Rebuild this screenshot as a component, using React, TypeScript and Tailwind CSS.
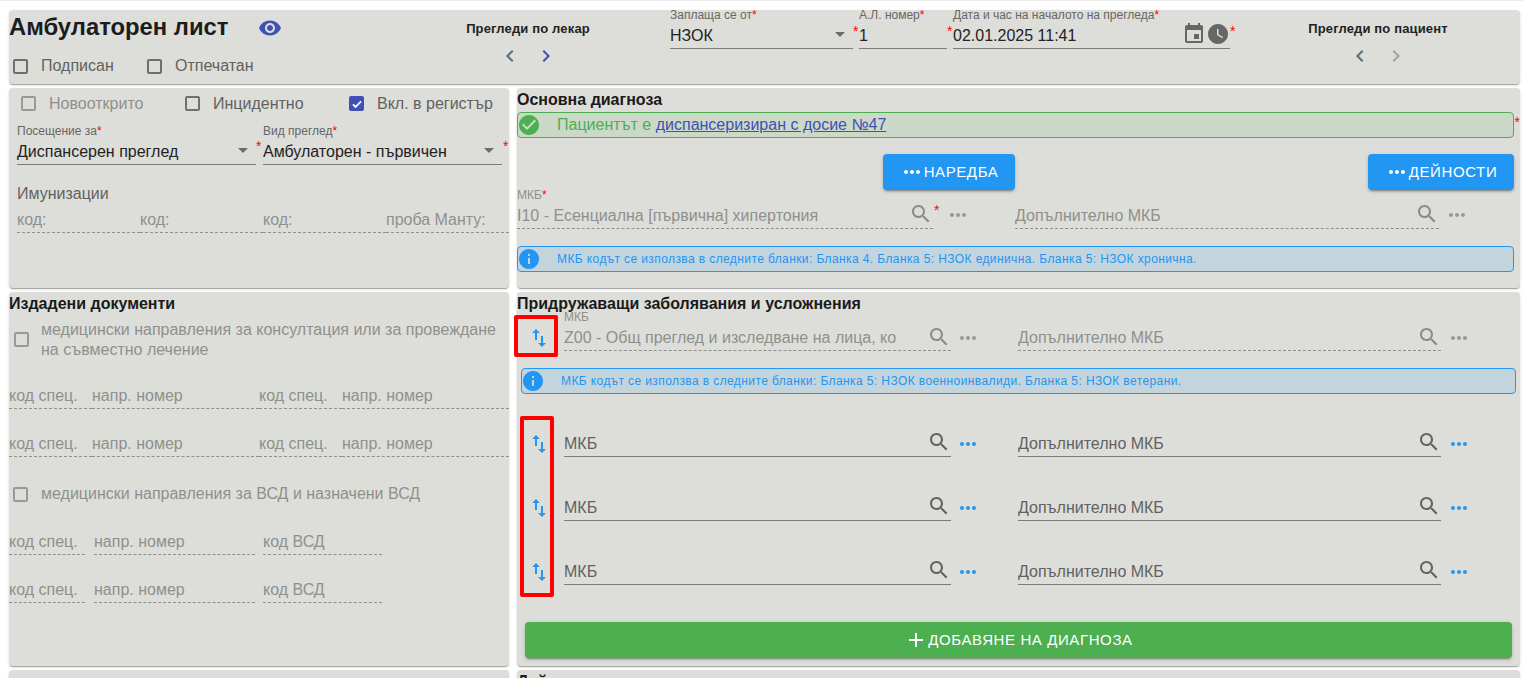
import React from "react";

const P = {
  eye: "M12 4.5C7 4.5 2.73 7.61 1 12c1.73 4.39 6 7.5 11 7.5s9.27-3.11 11-7.5c-1.73-4.39-6-7.5-11-7.5zM12 17c-2.76 0-5-2.24-5-5s2.24-5 5-5 5 2.24 5 5-2.24 5-5 5zm0-8c-1.66 0-3 1.34-3 3s1.34 3 3 3 3-1.34 3-3-1.34-3-3-3z",
  search: "M15.5 14h-.79l-.28-.27C15.41 12.59 16 11.11 16 9.5 16 5.91 13.09 3 9.5 3S3 5.91 3 9.5 5.91 16 9.5 16c1.61 0 3.09-.59 4.23-1.57l.27.28v.79l5 4.99L20.49 19l-4.99-5zm-6 0C7.01 14 5 11.99 5 9.5S7.01 5 9.5 5 14 7.01 14 9.5 11.99 14 9.5 14z",
  event: "M17 12h-5v5h5v-5zM16 1v2H8V1H6v2H5c-1.11 0-1.99.9-1.99 2L3 19c0 1.1.89 2 2 2h14c1.1 0 2-.9 2-2V5c0-1.1-.9-2-2-2h-1V1h-2zm3 18H5V8h14v11z",
  clock: "M12 2C6.5 2 2 6.5 2 12s4.5 10 10 10 10-4.5 10-10S17.5 2 12 2zm4.2 14.2L11 13V7h1.5v5.2l4.5 2.7-.8 1.3z",
  dots: "M6 10c-1.1 0-2 .9-2 2s.9 2 2 2 2-.9 2-2-.9-2-2-2zm12 0c-1.1 0-2 .9-2 2s.9 2 2 2 2-.9 2-2-.9-2-2-2zm-6 0c-1.1 0-2 .9-2 2s.9 2 2 2 2-.9 2-2-.9-2-2-2z",
  ok: "M12 2C6.48 2 2 6.48 2 12s4.48 10 10 10 10-4.48 10-10S17.52 2 12 2zm-2 15l-5-5 1.41-1.41L10 14.17l7.59-7.59L19 8l-9 9z",
  info: "M12 2C6.48 2 2 6.48 2 12s4.48 10 10 10 10-4.48 10-10S17.52 2 12 2zm1 15h-2v-6h2v6zm0-8h-2V7h2v2z",
  left: "M15.41 7.41L14 6l-6 6 6 6 1.41-1.41L10.83 12z",
  right: "M10 6L8.59 7.41 13.17 12l-4.58 4.59L10 18l6-6z",
  swap: "M16 17.01V10h-2v7.01h-3L15 21l4-3.99h-3zM9 3L5 6.99h3V14h2V6.99h3L9 3z",
  drop: "M7 10l5 5 5-5z",
  add: "M19 13h-6v6h-2v-6H5v-2h6V5h2v6h6v2z",
};

function Icon({ d, className = "" }: { d: string; className?: string }) {
  return (
    <svg viewBox="0 0 24 24" className={`w-6 h-6 shrink-0 fill-current ${className}`}>
      <path d={d} />
    </svg>
  );
}

const Star = ({ className = "" }: { className?: string }) => (
  <span className={`text-[#f00] text-[14px] leading-none ${className}`}>*</span>
);

function Check({ label, checked, disabled, className = "" }: { label: string; checked?: boolean; disabled?: boolean; className?: string }) {
  return (
    <div className={`flex items-center gap-[13px] text-[16px] ${disabled ? "text-[#8f908d]" : "text-[#62625f]"} ${className}`}>
      {checked ? (
        <span className="w-[15px] h-[15px] rounded-[2px] bg-[#3f51b5] flex items-center justify-center shrink-0">
          <svg viewBox="0 0 24 24" className="w-[14px] h-[14px] fill-none stroke-white stroke-[3]">
            <path d="M5 12.5l4.5 4.5L19 7.5" />
          </svg>
        </span>
      ) : (
        <span className={`w-[15px] h-[15px] rounded-[2px] border-2 shrink-0 ${disabled ? "border-[#999a97]" : "border-[#6f706d]"}`} />
      )}
      <span className="whitespace-nowrap">{label}</span>
    </div>
  );
}

function SelectField({ label, value, className = "" }: { label: string; value: string; className?: string }) {
  return (
    <div className={className}>
      <div className="h-[12px] text-[12px] leading-[12px] text-[#666] whitespace-nowrap">
        {label}
        <span className="text-[#f00]">*</span>
      </div>
      <div className="h-[28px] flex justify-between border-b border-[#7c7d7a] text-[16px] text-[#222]">
        <span className="self-center whitespace-nowrap pt-[3px]">{value}</span>
        <Icon d={P.drop} className="text-[#6b6b6b] mr-px mt-px" />
      </div>
    </div>
  );
}

function Cell({ text, className = "" }: { text: string; className?: string }) {
  return (
    <div className={`h-[26px] flex items-center border-b border-dashed border-[#8f908d] text-[16px] text-[#8f908d] whitespace-nowrap ${className}`}>
      {text}
    </div>
  );
}

function McbField({ value, disabled, small, className = "", star, searchTop = "mt-px" }: { value: string; disabled?: boolean; small?: string; className?: string; star?: boolean; searchTop?: string }) {
  return (
    <div className={`relative ${className}`}>
      {small && (
        <div className="absolute -top-[12px] left-0 text-[12px] leading-[12px] text-[#8f908d]">
          {small}
          {star && <span className="text-[#f00]">*</span>}
        </div>
      )}
      <div className={`h-[28px] flex justify-between border-b ${disabled ? "border-dashed border-[#8f908d] text-[#8f908d]" : "border-[#7c7d7a] text-[#62625f]"} text-[16px]`}>
        <span className={`self-center whitespace-nowrap overflow-hidden ${disabled ? "pt-[3px]" : "pt-[2px]"}`}>{value}</span>
        <Icon d={P.search} className={`${searchTop} ${disabled ? "text-[#8a8b88]" : "text-[#62625f]"}`} />
      </div>
    </div>
  );
}

function Alert({ kind, className = "", children }: { kind: "ok" | "info"; className?: string; children: React.ReactNode }) {
  return (
    <div className={`h-[26px] flex items-center rounded border ${kind === "ok" ? "border-[#4caf50] bg-[#ccd8c8]" : "border-[#2196f3] bg-[#c4d4dd]"} ${className}`}>
      <Icon d={kind === "ok" ? P.ok : P.info} className={`ml-[-1px] ${kind === "ok" ? "text-[#4caf50]" : "text-[#2196f3]"}`} />
      {children}
    </div>
  );
}

function Row({ first }: { first?: boolean }) {
  const top = first ? "mt-[2px]" : "mt-px";
  return (
    <div className={`flex items-start pl-[10px] ${first ? "mt-[9px] h-[30px]" : "mt-[36px] h-[28px]"}`}>
      <Icon d={P.swap} className="text-[#2196f3] mt-[3px]" />
      <McbField
        value={first ? "Z00 - Общ преглед и изследване на лица, ко" : "МКБ"}
        disabled={first}
        small={first ? "МКБ" : undefined}
        searchTop={top}
        className="w-[387px] ml-[13px]"
      />
      <Icon d={P.dots} className={`ml-[5px] mt-[3px] ${first ? "text-[#989996]" : "text-[#2196f3]"}`} />
      <McbField value="Допълнително МКБ" disabled={first} searchTop={top} className="w-[423px] ml-[38px]" />
      <Icon d={P.dots} className={`ml-[6px] mt-[3px] ${first ? "text-[#989996]" : "text-[#2196f3]"}`} />
    </div>
  );
}

const panel = "rounded bg-[#dddeD9] shadow-[0_2px_1px_-1px_rgba(0,0,0,0.2),0_1px_1px_0_rgba(0,0,0,0.14),0_1px_3px_0_rgba(0,0,0,0.12)]";
const heading = "h-[20px] mt-[2px] flex items-center text-[16px] font-bold text-[#1a1a1a] whitespace-nowrap";
const btn = "h-[36px] flex items-center justify-center rounded text-white text-[15px] tracking-[0.6px] shadow-[0_3px_1px_-2px_rgba(0,0,0,0.2),0_2px_2px_0_rgba(0,0,0,0.14),0_1px_5px_0_rgba(0,0,0,0.12)]";

function Nav({ title, leftC, rightC, className = "" }: { title: string; leftC: string; rightC: string; className?: string }) {
  return (
    <div className={`flex flex-col items-center pt-[10px] ${className}`}>
      <div className="h-[18px] flex items-center text-[13px] font-bold tracking-[0.15px] text-[#222] whitespace-nowrap">{title}</div>
      <div className="flex gap-3 mt-[6px]">
        <Icon d={P.left} className={leftC} />
        <Icon d={P.right} className={rightC} />
      </div>
    </div>
  );
}

export default function App() {
  return (
    <div className="h-[678px] overflow-hidden bg-white font-['Liberation_Sans',Arial,sans-serif]">
      <div className="h-px bg-[#eeeeee]" />
      <div className="pt-[9px] pl-[9px] pr-[3px]">
        {/* header */}
        <div className={`${panel} h-[74px] flex`}>
          <div className="w-[430px]">
            <div className="h-[33px] flex items-center">
              <span className="w-[219px] text-[23.8px] font-bold text-[#1c1c1c] whitespace-nowrap leading-none">Амбулаторен лист</span>
              <Icon d={P.eye} className="text-[#3f51b5] ml-[30px] mt-[3px]" />
            </div>
            <div className="flex mt-[11px] pl-[4px] h-[24px]">
              <Check label="Подписан" className="w-[134px]" />
              <Check label="Отпечатан" />
            </div>
          </div>
          <Nav title="Прегледи по лекар" leftC="text-[#546e7a]" rightC="text-[#3f51b5]" className="w-[178px]" />
          <div className="w-[53px]" />
          <SelectField label="Заплаща се от" value="НЗОК" className="w-[183px] -mt-px" />
          <Star className="w-[6px] mt-[14px]" />
          <div className="w-[88px] -mt-px">
            <div className="h-[12px] text-[12px] leading-[12px] text-[#666] whitespace-nowrap">А.Л. номер<span className="text-[#f00]">*</span></div>
            <div className="h-[28px] flex items-center border-b border-[#7c7d7a] text-[16px] text-[#222] pt-[3px]">1</div>
          </div>
          <Star className="w-[6px] mt-[14px]" />
          <div className="w-[277px] -mt-px">
            <div className="h-[12px] text-[12px] leading-[12px] text-[#666] whitespace-nowrap">Дата и час на началото на прегледа<span className="text-[#f00]">*</span></div>
            <div className="h-[28px] flex justify-between border-b border-[#7c7d7a] text-[16px] text-[#222]">
              <span className="self-center pt-[3px]">02.01.2025 11:41</span>
              <span className="flex text-[#666] mt-px h-6">
                <Icon d={P.event} />
                <Icon d={P.clock} />
              </span>
            </div>
          </div>
          <Star className="w-[6px] mt-[14px]" />
          <Nav title="Прегледи по пациент" leftC="text-[#546e7a]" rightC="text-[#a3a4a1]" className="flex-1" />
        </div>

        {/* row 2 */}
        <div className="flex gap-2 mt-1">
          <div className={`${panel} w-[500px] h-[200px]`}>
            <div className="h-[30px] flex pl-[12px] pt-px">
              <Check label="Новооткрито" disabled className="w-[164px]" />
              <Check label="Инцидентно" className="w-[164px]" />
              <Check label="Вкл. в регистър" checked />
            </div>
            <div className="flex pl-2 mt-[7px]">
              <SelectField label="Посещение за" value="Диспансерен преглед" className="w-[239px]" />
              <Star className="w-[7px] mt-[14px]" />
              <SelectField label="Вид преглед" value="Амбулаторен - първичен" className="w-[239px]" />
              <Star className="ml-[1px] mt-[14px]" />
            </div>
            <div className="pl-2 mt-[19px] h-[20px] flex items-center text-[16px] text-[#62625f]">Имунизации</div>
            <div className="grid grid-cols-[123px_123px_123px_123px] pl-2 mt-[3px]">
              <Cell text="код:" />
              <Cell text="код:" />
              <Cell text="код:" />
              <Cell text="проба Манту:" />
            </div>
          </div>

          <div className={`${panel} w-[1003px] h-[200px]`}>
            <div className={heading}>Основна диагноза</div>
            <div className="flex items-start mt-[2px]">
              <Alert kind="ok" className="w-[997px]">
                <span className="ml-[16px] text-[16px] text-[#4caf50] whitespace-nowrap">
                  Пациентът е <span className="text-[#3f51b5] underline">диспансеризиран с досие №47</span>
                </span>
              </Alert>
              <Star className="ml-px mt-[3px]" />
            </div>
            <div className="flex mt-[16px]">
              <div className={`${btn} bg-[#2196f3] w-[132px] ml-[366px]`}>
                <Icon d={P.dots} /> НАРЕДБА
              </div>
              <div className={`${btn} bg-[#2196f3] w-[146px] ml-[353px]`}>
                <Icon d={P.dots} /> ДЕЙНОСТИ
              </div>
            </div>
            <div className="flex items-start mt-[11px]">
              <div className="flex w-[416px]">
                <McbField value="I10 - Есенциална [първична] хипертония" disabled small="МКБ" star className="w-full" />
              </div>
              <Star className="ml-px mt-[2px] w-[12px]" />
              <Icon d={P.dots} className="mt-[2px] text-[#989996]" />
              <McbField value="Допълнително МКБ" disabled className="w-[424px] ml-[45px]" />
              <Icon d={P.dots} className="ml-[6px] mt-[2px] text-[#989996]" />
            </div>
            <Alert kind="info" className="w-[997px] mt-[17px]">
              <span className="ml-[16px] text-[12px] tracking-[0.4px] text-[#2196f3] whitespace-nowrap">
                МКБ кодът се използва в следните бланки: Бланка 4. Бланка 5: НЗОК единична. Бланка 5: НЗОК хронична.
              </span>
            </Alert>
          </div>
        </div>

        {/* row 3 */}
        <div className="flex gap-2 mt-1">
          <div className={`${panel} w-[500px] h-[374px]`}>
            <div className={heading}>Издадени документи</div>
            <div className="flex items-center gap-[12px] pl-[5px] mt-[6px] text-[16px] leading-[20px] text-[#8f908d]">
              <span className="w-[15px] h-[15px] mb-[2px] rounded-[2px] border-2 border-[#999a97] shrink-0" />
              <span>медицински направления за консултация или за провеждане на съвместно лечение</span>
            </div>
            <div className="grid grid-cols-[83px_167px_83px_167px] mt-[23px]">
              <Cell text="код спец." />
              <Cell text="напр. номер" />
              <Cell text="код спец." />
              <Cell text="напр. номер" />
            </div>
            <div className="grid grid-cols-[83px_167px_83px_167px] mt-[22px]">
              <Cell text="код спец." />
              <Cell text="напр. номер" />
              <Cell text="код спец." />
              <Cell text="напр. номер" />
            </div>
            <Check label="медицински направления за ВСД и назначени ВСД" disabled className="pl-[4px] mt-[27px] h-[20px]" />
            <div className="flex mt-[25px]">
              <Cell text="код спец." className="w-[76px]" />
              <Cell text="напр. номер" className="w-[161px] ml-[9px]" />
              <Cell text="код ВСД" className="w-[119px] ml-[8px]" />
            </div>
            <div className="flex mt-[22px]">
              <Cell text="код спец." className="w-[76px]" />
              <Cell text="напр. номер" className="w-[161px] ml-[9px]" />
              <Cell text="код ВСД" className="w-[119px] ml-[8px]" />
            </div>
          </div>

          <div className={`${panel} w-[1003px] h-[374px]`}>
            <div className={heading}>Придружаващи заболявания и усложнения</div>
            <Row first />
            <Alert kind="info" className="w-[995px] ml-[4px] mt-[15px] mb-[-1px]">
              <span className="ml-[16px] text-[12px] tracking-[0.4px] text-[#2196f3] whitespace-nowrap">
                МКБ кодът се използва в следните бланки: Бланка 5: НЗОК военноинвалиди. Бланка 5: НЗОК ветерани.
              </span>
            </Alert>
            <Row />
            <Row />
            <Row />
            <div className={`${btn} bg-[#4caf50] w-[987px] ml-2 mt-[37px]`}>
              <Icon d={P.add} /> ДОБАВЯНЕ НА ДИАГНОЗА
            </div>
          </div>
        </div>

        {/* row 4 */}
        <div className="flex gap-2 mt-1">
          <div className={`${panel} w-[500px] h-[60px]`} />
          <div className={`${panel} w-[1003px] h-[60px]`}>
            <div className={heading}>Дейности</div>
          </div>
        </div>
      </div>

      {/* annotation boxes drawn over the screenshot */}
      <div className="absolute left-[514px] top-[315px] w-[44px] h-[42px] border-[4px] border-[#f00] rounded-[2px]" />
      <div className="absolute left-[520px] top-[416px] w-[34px] h-[181px] border-[4px] border-[#f00] rounded-[2px]" />
    </div>
  );
}
